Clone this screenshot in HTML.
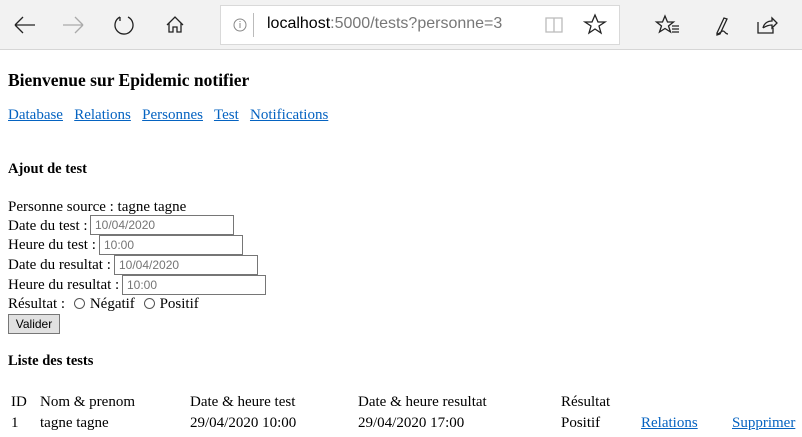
<!DOCTYPE html>
<html><head><meta charset="utf-8"><style>
*{margin:0;padding:0;box-sizing:border-box}
body{width:802px;height:437px;overflow:hidden;background:#fff;font-family:"Liberation Serif",serif;font-size:15px;color:#000;position:relative}
.bar{position:absolute;left:0;top:0;width:802px;height:50px;background:#f2f2f2;border-bottom:1px solid #d6d6d6}
.a{position:absolute;white-space:nowrap}
a{color:#0563c1;text-decoration:underline}
input.t{position:absolute;height:20px;border:1px solid #767676;font-family:"Liberation Sans",sans-serif;font-size:12px;color:#757575;padding-left:4px;background:#fff}
.rad{display:inline-block;width:11px;height:11px;border:1px solid #555;border-radius:50%;vertical-align:-1px;margin:0 5px 0 5px}
svg{position:absolute}
</style></head><body>
<div class="bar">
<div style="position:absolute;left:220px;top:5px;width:400px;height:40px;background:#fff;border:1px solid #d9d9d9"></div>
<div style="position:absolute;left:253px;top:13px;width:1px;height:24px;background:#bbb"></div>
<div class="a" style="left:267px;top:15px;font-family:'Liberation Sans',sans-serif;font-size:16px;color:#777"><span style="color:#000">localhost</span>:5000/tests?personne=3</div>
<svg width="802" height="50" style="left:0;top:0" fill="none" stroke="#222" stroke-width="1.3">
<path d="M15 25h20M15 25l8-8M15 25l8 8"/>
<path d="M63 25h20M83 25l-8-8M83 25l-8 8" stroke="#aaa"/>
<path d="M120 17a9 9 0 1 0 8 0M120 17v4" />
<path d="M167 25l8-8 8 8M169 23v9h4v-5h4v5h4v-9"/>
<circle cx="240" cy="25" r="6" stroke="#888" stroke-width="1"/><path d="M240 23v5M240 21v1" stroke="#888" stroke-width="1"/>
<path d="M546 18h8v14h-8zM554 18h8v14h-8z" stroke="#bbb"/>
<path d="M595 15l3 7h7l-6 4 2 7-6-4-6 4 2-7-6-4h7z"/>
<path d="M665 16l2.5 6h6l-5 4 2 6-5.5-3.5-5.5 3.5 2-6-5-4h6zM672 26h7M672 29h7M672 32h7"/>
<path d="M717 33l7-15 3 1-7 15-3 1zM717 34c3 0 4-3 6-3s2 3 5 3"/>
<path d="M758 22v11h15v-5M763 28c1-5 5-7 9-7v-3l5 5-5 5v-3c-3 0-6 1-9 3"/>
</svg>
</div>
<div class="a" style="left:8px;top:70px;font-weight:bold;font-size:17.5px">Bienvenue sur Epidemic notifier</div>
<div class="a" style="left:8px;top:107px"><a>Database</a>&nbsp;&nbsp; <a>Relations</a>&nbsp;&nbsp; <a>Personnes</a>&nbsp;&nbsp; <a>Test</a>&nbsp;&nbsp; <a>Notifications</a></div>
<div class="a" style="left:8px;top:161px;font-weight:bold;font-size:14.5px">Ajout de test</div>
<div class="a" style="left:8px;top:199px">Personne source : tagne tagne</div>
<div class="a" style="left:8px;top:218px">Date du test :</div>
<input class="t" style="left:90px;top:215px;width:144px" value="10/04/2020">
<div class="a" style="left:8px;top:237px">Heure du test :</div>
<input class="t" style="left:99px;top:235px;width:144px" value="10:00">
<div class="a" style="left:8px;top:257px">Date du resultat :</div>
<input class="t" style="left:114px;top:255px;width:144px" value="10/04/2020">
<div class="a" style="left:8px;top:277px">Heure du resultat :</div>
<input class="t" style="left:122px;top:275px;width:144px" value="10:00">
<div class="a" style="left:8px;top:296px">Résultat : <span class="rad"></span>Négatif <span class="rad"></span>Positif</div>
<div class="a" style="left:8px;top:314px;width:52px;height:20px;border:1px solid #777;background:#e1e1e1;font-family:'Liberation Sans',sans-serif;font-size:12px;text-align:center;line-height:18px">Valider</div>
<div class="a" style="left:8px;top:353px;font-weight:bold;font-size:14.5px">Liste des tests</div>
<div class="a" style="left:11px;top:394px">ID</div>
<div class="a" style="left:40px;top:394px">Nom &amp; prenom</div>
<div class="a" style="left:190px;top:394px">Date &amp; heure test</div>
<div class="a" style="left:358px;top:394px">Date &amp; heure resultat</div>
<div class="a" style="left:561px;top:394px">Résultat</div>
<div class="a" style="left:11px;top:415px">1</div>
<div class="a" style="left:40px;top:415px">tagne tagne</div>
<div class="a" style="left:190px;top:415px">29/04/2020 10:00</div>
<div class="a" style="left:358px;top:415px">29/04/2020 17:00</div>
<div class="a" style="left:561px;top:415px">Positif</div>
<div class="a" style="left:641px;top:415px"><a>Relations</a></div>
<div class="a" style="left:732px;top:415px"><a>Supprimer</a></div>
</body></html>
